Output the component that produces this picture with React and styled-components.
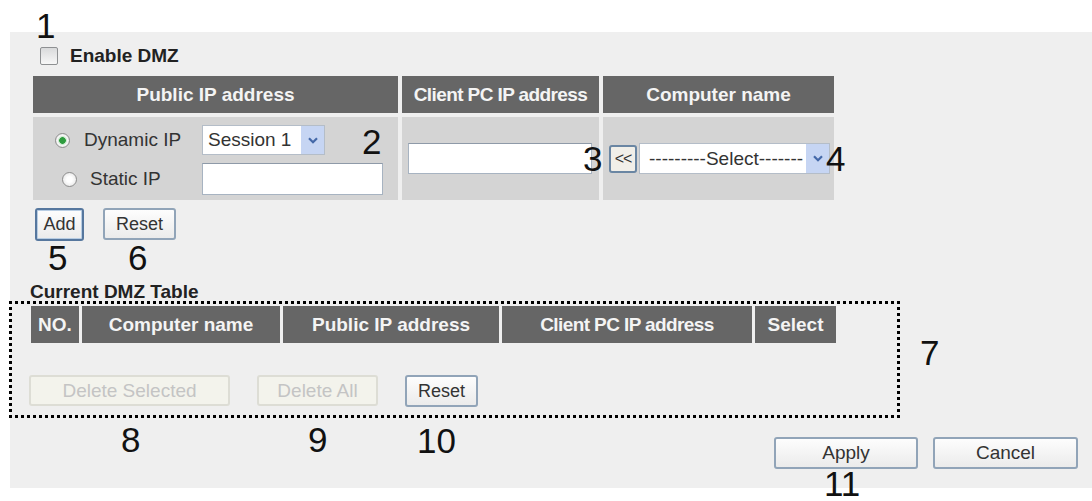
import React from 'react';
import styled, { createGlobalStyle, css } from 'styled-components';

const GlobalStyle = createGlobalStyle`
  html, body {
    margin: 0;
    padding: 0;
    background: #ffffff;
  }
  body {
    font-family: "Liberation Sans", Arial, sans-serif;
    color: #333;
  }
`;

const Page = styled.div`
  position: relative;
  width: 1092px;
  height: 501px;
  overflow: hidden;
  padding-top: 32px;
  box-sizing: border-box;
`;

const Panel = styled.div`
  margin-left: 10px;
  width: 1082px;
  height: 456px;
  background: #efefef;
  display: flex;
  flex-direction: column;
`;

const EnableRow = styled.label`
  display: flex;
  align-items: center;
  gap: 12px;
  margin: 15px 0 0 30px;
  height: 18px;
  font-size: 19px;
  font-weight: bold;
  color: #222;
`;

const CheckBox = styled.input`
  appearance: none;
  margin: 0;
  width: 18px;
  height: 18px;
  box-sizing: border-box;
  border: 1px solid #8e9092;
  border-radius: 2px;
  background: linear-gradient(#d9dadb, #f7f7f7);
`;

const TopGrid = styled.div`
  display: grid;
  grid-template-columns: 365px 197px 231px;
  grid-template-rows: 37px 83px;
  column-gap: 4px;
  row-gap: 4px;
  margin: 11px 0 0 23px;
`;

const HeadCell = styled.div`
  background: #666666;
  color: #f4f4f4;
  font-size: 19px;
  font-weight: bold;
  display: flex;
  align-items: center;
  justify-content: center;
  white-space: nowrap;
  letter-spacing: ${p => (p.$tight ? '-0.6px' : '0')};
`;

const BodyCell = styled.div`
  background: #d4d4d4;
  display: flex;
  align-items: center;
  gap: 2px;
  padding-left: 6px;
`;

const ModeCell = styled.div`
  background: #d4d4d4;
  display: grid;
  grid-template-columns: 169px 181px;
  grid-template-rows: 30px 32px;
  row-gap: 8px;
  padding-top: 8px;
  align-items: center;
`;

const RadioLabel = styled.label`
  display: flex;
  align-items: center;
  gap: ${p => p.$gap}px;
  padding-left: ${p => p.$indent}px;
  font-size: 19px;
  color: #333;
`;

const Radio = styled.input`
  appearance: none;
  margin: 0;
  width: 15px;
  height: 15px;
  box-sizing: border-box;
  border: 1px solid #8d8d8d;
  border-radius: 50%;
  background: radial-gradient(circle, #ffffff 30%, #dedede 100%);
  &:checked {
    background: radial-gradient(circle, #2f9c3f 0 3px, #bfe6c4 3.6px, #f6f6f6 5px, #d8d8d8 100%);
  }
`;

const TextInput = styled.input`
  box-sizing: border-box;
  margin: 0;
  width: ${p => p.$w}px;
  height: ${p => p.$h}px;
  border: 1px solid #a7b3c1;
  border-top-color: #8e9aa8;
  background: #fff;
  font: 19px "Liberation Sans", Arial, sans-serif;
  padding: 0 4px;
`;

const SelectBox = styled.div`
  box-sizing: border-box;
  width: ${p => p.$w}px;
  height: ${p => p.$h}px;
  display: flex;
  align-items: stretch;
  background: #fff;
  border: 1px solid #b4bdc8;
  font-size: 19px;
  color: #333;
`;

const SelectText = styled.span`
  flex: 1;
  display: flex;
  align-items: center;
  padding-left: ${p => p.$pad}px;
  white-space: nowrap;
  overflow: hidden;
`;

const SelectArrow = styled.span`
  width: 23px;
  display: flex;
  align-items: center;
  justify-content: center;
  background: #c6d5f3;
`;

const Chevron = () => (
  <svg width="10" height="7" viewBox="0 0 10 7">
    <path d="M1 1.2 L5 5.2 L9 1.2" fill="none" stroke="#4468a8" strokeWidth="2.2" />
  </svg>
);

const Btn = styled.button`
  box-sizing: border-box;
  width: ${p => p.$w}px;
  height: ${p => p.$h}px;
  margin: 0;
  padding: 0;
  font: ${p => p.$size || 18}px "Liberation Sans", Arial, sans-serif;
  color: #333;
  background: linear-gradient(#fdfdfd, #ebebeb);
  border: 2px solid #91a4b8;
  border-radius: 3px;
  ${p =>
    p.$focus &&
    css`
      border-color: #56779e;
      box-shadow: inset 0 0 0 1px #b8cde3;
    `}
  &:disabled {
    color: #c4c4c4;
    background: #f3f3ec;
    border-color: #ddddd5;
  }
`;

const ArrowBtn = styled(Btn)`
  font-size: 16px;
  letter-spacing: -1px;
  background: #f1efe9;
  border-color: #6a86a3;
`;

const ButtonRow = styled.div`
  display: flex;
  gap: ${p => p.$gap}px;
  margin: ${p => p.$margin};
  justify-content: ${p => p.$justify || 'flex-start'};
`;

const SectionTitle = styled.div`
  margin: 41px 0 0 20px;
  font-size: 19px;
  line-height: 20px;
  font-weight: bold;
  color: #222;
`;

const DottedBox = styled.div`
  box-sizing: border-box;
  margin: -1px 0 0 -1px;
  width: 891px;
  height: 117px;
  border: 3px dotted #000;
  padding: 2px 0 0 19px;
`;

const ListHead = styled.div`
  display: grid;
  grid-template-columns: 48px 198px 216px 250px 81px;
  grid-template-rows: 37px;
  column-gap: 3px;
`;

const Footer = styled.div`
  display: flex;
  justify-content: flex-end;
  gap: 15px;
  margin: 19px 14px 0 0;
`;

const Callout = styled.span`
  position: absolute;
  left: ${p => p.$x}px;
  top: ${p => p.$y}px;
  font-size: 35px;
  line-height: 35px;
  color: #111;
`;

const callouts = [
  ['1', 36, 8],
  ['2', 362, 124],
  ['3', 583, 141],
  ['4', 826, 141],
  ['5', 48, 240],
  ['6', 128, 240],
  ['7', 920, 335],
  ['8', 121, 422],
  ['9', 308, 422],
  ['10', 417, 423],
  ['11', 824, 466],
];

export default function App() {
  return (
    <>
      <GlobalStyle />
      <Page>
        <Panel>
          <EnableRow>
            <CheckBox type="checkbox" />
            Enable DMZ
          </EnableRow>

          <TopGrid>
            <HeadCell>Public IP address</HeadCell>
            <HeadCell $tight>Client PC IP address</HeadCell>
            <HeadCell>Computer name</HeadCell>

            <ModeCell>
              <RadioLabel $indent={22} $gap={14}>
                <Radio type="radio" name="mode" defaultChecked />
                Dynamic IP
              </RadioLabel>
              <SelectBox $w={123} $h={30}>
                <SelectText $pad={5}>Session 1</SelectText>
                <SelectArrow><Chevron /></SelectArrow>
              </SelectBox>
              <RadioLabel $indent={29} $gap={13}>
                <Radio type="radio" name="mode" />
                Static IP
              </RadioLabel>
              <TextInput $w={181} $h={32} />
            </ModeCell>

            <BodyCell>
              <TextInput $w={184} $h={31} />
            </BodyCell>

            <BodyCell>
              <ArrowBtn $w={28} $h={28}>&lt;&lt;</ArrowBtn>
              <SelectBox $w={191} $h={31}>
                <SelectText $pad={9}>---------Select-------</SelectText>
                <SelectArrow><Chevron /></SelectArrow>
              </SelectBox>
            </BodyCell>
          </TopGrid>

          <ButtonRow $gap={19} $margin="8px 0 0 25px">
            <Btn $w={49} $h={33} $focus>Add</Btn>
            <Btn $w={73} $h={32}>Reset</Btn>
          </ButtonRow>

          <SectionTitle>Current DMZ Table</SectionTitle>
          <DottedBox>
            <ListHead>
              <HeadCell>NO.</HeadCell>
              <HeadCell>Computer name</HeadCell>
              <HeadCell>Public IP address</HeadCell>
              <HeadCell $tight>Client PC IP address</HeadCell>
              <HeadCell>Select</HeadCell>
            </ListHead>
            <ButtonRow $gap={27} $margin="32px 0 0 -2px">
              <Btn $w={201} $h={31} $size={19} disabled>Delete Selected</Btn>
              <Btn $w={121} $h={31} $size={19} disabled>Delete All</Btn>
              <Btn $w={73} $h={32}>Reset</Btn>
            </ButtonRow>
          </DottedBox>

          <Footer>
            <Btn $w={144} $h={32} $size={19}>Apply</Btn>
            <Btn $w={145} $h={32} $size={19}>Cancel</Btn>
          </Footer>
        </Panel>

        {callouts.map(([label, x, y]) => (
          <Callout key={label} $x={x} $y={y}>{label}</Callout>
        ))}
      </Page>
    </>
  );
}
